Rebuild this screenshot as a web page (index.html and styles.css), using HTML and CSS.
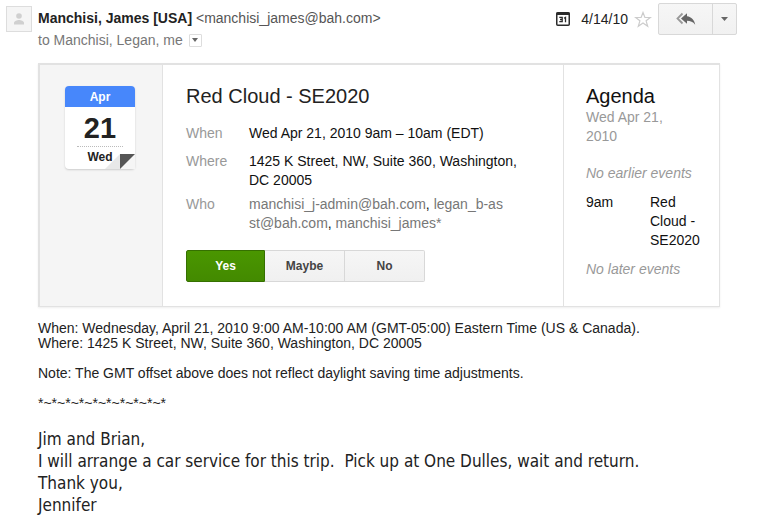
FILE: index.html
```html
<!DOCTYPE html>
<html lang="en">
<head>
<meta charset="utf-8">
<title>Red Cloud - SE2020</title>
<link rel="stylesheet" href="styles.css">
</head>
<body>
<article class="message">
  <header class="head">
    <span class="avatar">
      <svg width="12" height="12" viewBox="0 0 12 12" fill="#d0d0d0" aria-hidden="true"><circle cx="6" cy="3" r="2.8"/><path d="M1 11.4V10C1 8 4 7 6 7s5 1 5 3v1.4z"/></svg>
    </span>
    <div class="people">
      <div class="from"><strong>Manchisi, James [USA]</strong> <span class="address">&lt;manchisi_james@bah.com&gt;</span></div>
      <div class="to">to Manchisi, Legan, me
        <button class="details" type="button" aria-label="Show details"><svg width="6" height="4" viewBox="0 0 6 4" aria-hidden="true"><path d="M0 0h6L3 4z" fill="#666"/></svg></button>
      </div>
    </div>
    <div class="meta">
      <svg class="cal" width="14" height="14" viewBox="0 0 14 14" aria-hidden="true"><rect x="0.75" y="0.75" width="12.5" height="12.5" rx="1" fill="#fff" stroke="#2b2b2b" stroke-width="1.5"/><path d="M0.5 0.5h13v2.5H0.5z" fill="#2b2b2b"/><path d="M3.3 5.4h2.9v4.3H3.3M4 7.5h2.2M8 6.2l1.5-.9v4.9" fill="none" stroke="#2b2b2b" stroke-width="1.3"/></svg>
      <time>4/14/10</time>
      <button class="star" type="button" aria-label="Star"><svg width="18" height="17" viewBox="0 0 18 17" aria-hidden="true"><path d="M9 1.500l1.900 5h5.400l-4.200 3.300 1.600 5.500L9 12.100l-4.700 3.200 1.600-5.500L1.700 6.500h5.400z" fill="#fff" stroke="#ccc" stroke-width="1.2"/></svg></button>
      <div class="actions">
        <button class="reply" type="button" aria-label="Reply to all"><svg width="20" height="14" viewBox="0 0 20 14" aria-hidden="true"><path d="M6.500 1.500L1.500 6.500l5 5" fill="none" stroke="#999" stroke-width="1.8"/><path d="M11 1.200L5 6.500l6 5.300V8.700c3.500 0 6 1 8.200 4C18.500 8 15.500 4.700 11 4.200z" fill="#666"/></svg></button>
        <button class="more" type="button" aria-label="More"><svg width="7" height="4" viewBox="0 0 7 4" aria-hidden="true"><path d="M0 0h7L3.500 4z" fill="#666"/></svg></button>
      </div>
    </div>
  </header>

  <section class="invite">
    <div class="day">
      <div class="leaf">
        <div class="month">Apr</div>
        <div class="date">21</div>
        <div class="weekday">Wed</div>
        <svg class="fold" width="30" height="15" viewBox="0 0 30 15" aria-hidden="true"><path d="M0 15L15 0v15z" fill="#e8e8e8"/><path d="M15 15L30 0v15z" fill="#f5f5f5"/><path d="M15 0h15L15 15z" fill="#555"/></svg>
      </div>
    </div>
    <div class="event">
      <h1>Red Cloud - SE2020</h1>
      <dl>
        <dt>When</dt><dd>Wed Apr 21, 2010 9am – 10am (EDT)</dd>
        <dt>Where</dt><dd>1425 K Street, NW, Suite 360, Washington, DC 20005</dd>
        <dt>Who</dt><dd class="guests"><span>manchisi_j-admin@bah.com</span>, <span>legan_b-as<wbr>st@bah.com</span>, <span>manchisi_james*</span></dd>
      </dl>
      <div class="rsvp">
        <button class="yes" type="button">Yes</button><button type="button">Maybe</button><button type="button">No</button>
      </div>
    </div>
    <aside class="agenda">
      <h2>Agenda</h2>
      <p class="when">Wed Apr 21, 2010</p>
      <p class="none">No earlier events</p>
      <div class="slot"><span>9am</span><span>Red Cloud - SE2020</span></div>
      <p class="none">No later events</p>
    </aside>
  </section>

  <div class="body">
    <p>When: Wednesday, April 21, 2010 9:00 AM-10:00 AM (GMT-05:00) Eastern Time (US &amp; Canada).<br>Where: 1425 K Street, NW, Suite 360, Washington, DC 20005</p>
    <p>Note: The GMT offset above does not reflect daylight saving time adjustments.</p>
    <p>*~*~*~*~*~*~*~*~*~*</p>
    <p class="note">Jim and Brian,<br>I will arrange a car service for this trip.&nbsp; Pick up at One Dulles, wait and return.<br>Thank you,<br>Jennifer</p>
  </div>
</article>
</body>
</html>
```
FILE: styles.css
```css
* { box-sizing: border-box; }
body { margin: 0; background: #fff; color: #222; font: 14px/20px "Liberation Sans", Arial, sans-serif; }
h1, h2, p, dl, dd { margin: 0; }
button { font: inherit; padding: 0; margin: 0; }
svg { display: block; }

.message { padding: 3px 22px 0 6px; }
.head { display: flex; align-items: flex-start; }
.avatar { display: flex; align-items: center; justify-content: center; width: 26px; height: 26px; margin: 3px 6px 0 0; border: 1px solid #ddd; background: #f5f5f5; }
.people { flex: 1; padding-top: 4px; line-height: 22px; }
.address { color: #555; }
.to { display: flex; align-items: center; gap: 6px; color: #777; }
.details { display: flex; align-items: center; justify-content: center; width: 13px; height: 13px; border: 1px solid #ddd; background: #fff; border-radius: 1px; }
.meta { display: flex; align-items: center; }
.meta time { margin: 0 6px 0 11px; }
.star { border: 0; background: none; margin-right: 6px; }
.actions { display: flex; height: 32px; border: 1px solid #d8d8d8; border-radius: 2px; background: linear-gradient(#f6f6f6, #f1f1f1); }
.actions button { display: flex; align-items: center; justify-content: center; border: 0; background: none; }
.reply { width: 53px; }
.actions .more { width: 24px; border-left: 1px solid #d8d8d8; }

.invite { display: flex; margin: 12px 17px 0 32px; border: 1px solid #e2e2e2; border-top-width: 2px; border-left-width: 2px; box-shadow: 0 1px 2px #eee; }
.day { flex: none; width: 123px; padding: 21px 0 0 25px; background: #f5f5f5; border-right: 1px solid #e2e2e2; }
.leaf { position: relative; width: 70px; height: 83px; background: #fff; border-radius: 4px; box-shadow: 0 1px 2px #ccc; text-align: center; font-weight: bold; }
.month { height: 21px; border-radius: 4px 4px 0 0; background: #4787fb; color: #fff; font-size: 12px; line-height: 22px; }
.date { height: 40px; margin: 0 12px; border-bottom: 1px dotted #bbb; font-size: 29px; line-height: 42px; }
.weekday { position: relative; z-index: 1; font-size: 12px; line-height: 21px; }
.fold { position: absolute; right: 0; bottom: 0; }

.event { flex: 1; padding: 19px 22px 24px 23px; }
h1, h2 { font-size: 20px; line-height: 24px; font-weight: normal; }
dl { display: grid; grid-template-columns: 63px 1fr; row-gap: 5px; margin: 16px 0 17px; line-height: 19px; }
dl > :nth-child(-n+2) { margin-bottom: 4px; }
dt { color: #999; }
.event dd { max-width: 290px; color: #111; }
.guests span { color: #777; }
.rsvp { display: flex; }
.rsvp button { width: 80px; height: 32px; border: 1px solid #d8d8d8; border-left-width: 0; background: linear-gradient(#f6f6f6, #f0f0f0); color: #444; font-size: 12px; font-weight: bold; }
.rsvp button:last-child { border-radius: 0 2px 2px 0; }
.rsvp .yes { width: 79px; border: 1px solid #357000; border-radius: 2px 0 0 2px; background: linear-gradient(#4a9600, #438a00); color: #fff; }

.agenda { flex: none; width: 156px; padding: 19px 16px 0 22px; border-left: 1px solid #e2e2e2; line-height: 19px; color: #111; }
.agenda .when { max-width: 96px; margin-bottom: 18px; color: #999; }
.agenda .none { color: #999; font-style: italic; }
.slot { display: grid; grid-template-columns: 64px 1fr; margin: 10px 0; }

.body { margin: 14px 0 0 32px; line-height: 15px; }
.body p { margin-bottom: 15px; }
.body .note { padding-top: 2px; font-family: "DejaVu Sans Condensed", "Open Sans", sans-serif; font-size: 17px; line-height: 22px; }
```
